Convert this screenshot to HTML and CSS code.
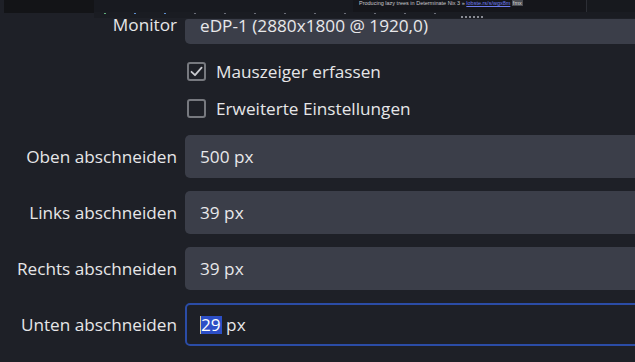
FILE: index.html
```html
<!DOCTYPE html>
<html lang="de">
<head>
<meta charset="utf-8">
<link rel="stylesheet" href="styles.css">
</head>
<body>
<div class="strip">
  <div class="strip-left"><div class="strip-black"></div></div>
  <div class="preview">
    <div class="preview-top">
      <div class="preview-fill"></div>
      <div class="headline">Producing lazy trees in Determinate Nix 3 » <span class="link">lobste.rs/s/wgx8m</span> <span class="tag">fmx</span></div>
      <div class="preview-right"></div>
    </div>
    <div class="preview-dots">
      <span class="d g"></span><span class="d b"></span><span class="d b"></span><span class="d"></span><span class="d"></span><span class="d"></span><span class="d"></span><span class="d"></span><span class="d"></span><span class="d"></span><span class="d"></span><span class="d"></span>
    </div>
    <div class="grip"><span></span><span></span><span></span><span></span><span></span><span></span></div>
  </div>
</div>

<div class="form">
  <div class="row row-monitor">
    <div class="label">Monitor</div>
    <div class="field field-monitor"><span class="mon-text">eDP-1 (2880x1800 @ 1920,0)</span></div>
  </div>
  <div class="row row-check row-check-first">
    <div class="label"></div>
    <div class="check">
      <span class="box">
        <svg width="15" height="15" viewBox="0 0 15 15"><path d="M2.5 7.8 L6 11.2 L12.6 3.6" fill="none" stroke="#c9cacf" stroke-width="1.8" stroke-linecap="round" stroke-linejoin="round"/></svg>
      </span>
      <span class="check-text">Mauszeiger erfassen</span>
    </div>
  </div>
  <div class="row row-check">
    <div class="label"></div>
    <div class="check">
      <span class="box"></span>
      <span class="check-text">Erweiterte Einstellungen</span>
    </div>
  </div>
  <div class="row row-input row-first">
    <div class="label">Oben abschneiden</div>
    <div class="field">500 px</div>
  </div>
  <div class="row row-input">
    <div class="label">Links abschneiden</div>
    <div class="field">39 px</div>
  </div>
  <div class="row row-input">
    <div class="label">Rechts abschneiden</div>
    <div class="field">39 px</div>
  </div>
  <div class="row row-input">
    <div class="label">Unten abschneiden</div>
    <div class="field field-focus"><span class="caret"></span><span class="sel">29</span>&nbsp;px</div>
  </div>
</div>
</body>
</html>
```

FILE: styles.css
```css
* { box-sizing: border-box; }
html, body {
  margin: 0;
  padding: 0;
  width: 635px;
  height: 362px;
  overflow: hidden;
  background: #1e2027;
  font-family: "Open Sans", "Noto Sans", sans-serif;
  color: #e6e6e8;
}

.strip {
  display: flex;
  height: 18px;
  width: 635px;
}
.strip-left {
  width: 94px;
  padding-left: 4px;
  background: #1e2027;
}
.strip-black {
  height: 13px;
  background: #131417;
}
.preview {
  flex: 1;
  background: #1a1c22;
  display: flex;
  flex-direction: column;
  overflow: hidden;
}
.preview-top {
  display: flex;
  height: 12px;
}
.preview-fill {
  width: 259px;
  background: #181a20;
}
.headline {
  width: 234px;
  background: #15161b;
  font-family: "Liberation Sans", sans-serif;
  font-size: 5.5px;
  line-height: 7px;
  color: #c8c8cc;
  padding-left: 6px;
  white-space: nowrap;
  overflow: hidden;
  border-right: 1px solid #2c2e35;
}
.link { color: #6d7cf0; text-decoration: underline; }
.tag { background: #4a4c52; color: #ddd; padding: 0 1px; }
.preview-right {
  flex: 1;
  background: #17191e;
}
.preview-dots {
  display: flex;
  gap: 28px;
  height: 2px;
  padding-left: 10px;
  margin-top: 1px;
}
.d { width: 2px; height: 1px; background: #6b6e78; }
.d.g { background: #5fae7a; }
.d.b { background: #5d8fd0; }
.grip {
  display: flex;
  gap: 2px;
  margin-left: 367px;
  margin-top: 1px;
  height: 2px;
}
.grip span {
  width: 2px;
  height: 2px;
  background: #8a8c94;
}

.form {
  display: flex;
  flex-direction: column;
  width: 700px;
}
.row {
  display: grid;
  grid-template-columns: 177px 1fr;
  column-gap: 8px;
  align-items: center;
}
.label {
  text-align: right;
  font-size: 17.2px;
  white-space: nowrap;
  color: #e6e6e8;
}
.field {
  height: 43px;
  background: #3b3e49;
  border-radius: 5px;
  padding-left: 15px;
  display: flex;
  align-items: center;
  font-size: 17.2px;
  color: #e8e8ea;
  white-space: nowrap;
}

.row-monitor {
  margin-top: 1px;
  height: 25px;
  align-items: start;
}
.row-monitor .label {
  line-height: 12px;
}
.field-monitor {
  height: 25px;
  border-radius: 3px 3px 5px 5px;
  align-items: flex-start;
}
.mon-text { line-height: 14px; }

.row-check { height: 37px; }
.row-check-first { margin-top: 9px; }
.check {
  display: flex;
  align-items: center;
  gap: 10px;
  padding-left: 2px;
}
.box {
  width: 19px;
  height: 19px;
  border: 2px solid #77797f;
  border-radius: 3px;
  display: flex;
  align-items: center;
  justify-content: center;
}
.check-text {
  font-size: 17.2px;
  color: #e6e6e8;
}

.row-input { margin-top: 13px; }
.row-first { margin-top: 8px; }

.field-focus {
  background: #1e2027;
  border: 2px solid #2b4ca6;
  padding-left: 13px;
}
.caret {
  width: 1px;
  height: 18px;
  background: #d8c89a;
}
.sel {
  background: #2d4fc6;
  color: #ffffff;
  line-height: 18px;
  padding-right: 1px;
}
```
